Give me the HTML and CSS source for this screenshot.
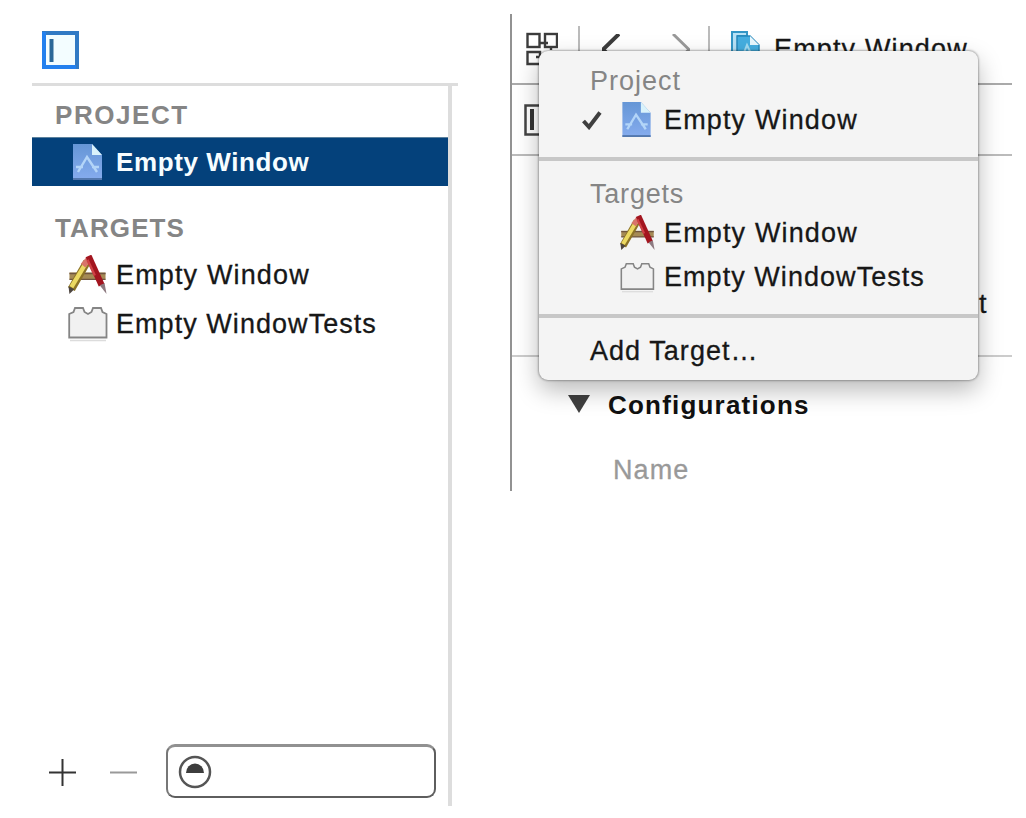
FILE: index.html
```html
<!DOCTYPE html>
<html lang="en">
<head>
<meta charset="utf-8">
<title>Project and targets</title>
<link rel="stylesheet" href="styles.css">
</head>
<body>
<svg class="defs" aria-hidden="true">
  <defs>
    <linearGradient id="blueprint" x1="0" y1="0" x2="0" y2="1">
      <stop offset="0" stop-color="#6596d6"/><stop offset="1" stop-color="#86acee"/>
    </linearGradient>
    <symbol id="project" viewBox="0 0 30 37">
      <path d="M0 0H19L29 11V36H0Z" fill="url(#blueprint)"/>
      <path d="M0 35H29" stroke="#5378ae" stroke-width="2"/>
      <path d="M19 0L29 11H19Z" fill="#d9f2fb"/>
      <path d="M5 28L14 13L24 28M3 23H10M19 23H26" fill="none" stroke="#b3d5f8" stroke-width="2.4"/>
    </symbol>
    <symbol id="app" viewBox="0 0 39 41">
      <path d="M1 18H38V25H1Z" fill="#a58a55"/>
      <path d="M1 19H38M1 25H38" stroke="#6f5540" stroke-width="1.5"/>
      <path d="M19 7L3 35" stroke="#8c7326" stroke-width="8"/>
      <path d="M18 8L3 33" stroke="#ecd962" stroke-width="4.5"/>
      <path d="M15 11L20 5" stroke="#d8746a" stroke-width="6"/>
      <path d="M0 32L6 35L1 40Z" fill="#4d4540"/>
      <path d="M20.500 1L34 31" stroke="#a3151f" stroke-width="6.5"/>
      <path d="M19.500 5L27 21" stroke="#cf4145" stroke-width="2.5"/>
      <path d="M32 31L37 29L39 40Z" fill="#8d7a80"/>
    </symbol>
    <symbol id="brick" viewBox="0 0 40 36">
      <path d="M1.200 31.500V8L5.500 6L7 2H15L16.500 6L20 8L23.500 6L25 2H33L34.500 6L38.500 8V31.500Z" fill="#f1f1f1" stroke="#858585" stroke-width="1.8"/>
      <path d="M2 34.500H38" stroke="#dcdcdc" stroke-width="1.5"/>
    </symbol>
  </defs>
</svg>
<main class="stage">
  <section class="sidebar">
    <header class="sidebar-head">
      <svg class="panel-icon" viewBox="0 0 37 38"><rect x="2" y="2" width="33" height="34" fill="#f3fdff" stroke="#317ac4" stroke-width="4"/><path d="M2 1V36H34" fill="none" stroke="#2380ee" stroke-width="4"/><path d="M9.500 8V31" stroke="#2c6898" stroke-width="4"/></svg>
    </header>
    <div class="sidebar-body">
      <h2 class="group"><span class="t-project">PROJECT</span></h2>
      <div class="item selected"><svg class="ico-project"><use href="#project"/></svg><span>Empty Window</span></div>
      <h2 class="group targets"><span class="t-targets">TARGETS</span></h2>
      <div class="item"><svg class="ico-app"><use href="#app"/></svg><span>Empty Window</span></div>
      <div class="item"><svg class="ico-brick"><use href="#brick"/></svg><span class="long">Empty WindowTests</span></div>
      <footer class="controls">
        <svg class="plus" viewBox="0 0 27 27"><path d="M0 13.500H27M13.500 0V27" stroke="#333" stroke-width="2"/></svg>
        <svg class="minus" viewBox="0 0 27 27"><path d="M0 13.500H27" stroke="#999" stroke-width="2"/></svg>
        <div class="filter"><svg viewBox="0 0 34 34"><circle cx="17" cy="17" r="15" fill="#fff" stroke="#555" stroke-width="2.5"/><path d="M8 18A9 9.500 0 0 1 26 18Z" fill="#3d3d3d"/></svg></div>
      </footer>
    </div>
  </section>

  <section class="editor">
    <div class="jumpbar">
      <svg class="related" viewBox="0 0 32 34"><g fill="none" stroke="#3c3c3c" stroke-width="2.400"><rect x="1.500" y="2" width="12" height="13"/><rect x="19" y="2" width="12" height="13"/><path d="M14 32H1.500V20H14V25H10M13 11H22M25 15V18"/></g></svg>
      <i class="divider"></i>
      <svg class="back" viewBox="0 0 18 30"><path d="M17 0L1 15.500L17 31" fill="none" stroke="#3c3c3c" stroke-width="4"/></svg>
      <svg class="forward" viewBox="0 0 18 30"><path d="M1 0L17 15.500L1 31" fill="none" stroke="#999" stroke-width="3"/></svg>
      <i class="divider second"></i>
      <svg class="doc" viewBox="0 0 29 36"><path d="M1 1H16V5H7V28H1Z" fill="#b7e2f6" stroke="#3296c6" stroke-width="2"/><path d="M6 5H19L28 14V35H6Z" fill="#45aee0" stroke="#2689bc" stroke-width="1.500"/><path d="M19 5V14H28Z" fill="#e7f8ff"/><path d="M10 29L16 14L23 29M12 23H22" fill="none" stroke="#a2dcf3" stroke-width="2"/></svg>
      <span class="crumb">Empty Window</span>
    </div>
    <div class="tabbar"><svg class="tab-icon" viewBox="0 0 32 32"><rect x="1.500" y="1.500" width="29" height="29" fill="#fff" stroke="#444" stroke-width="2.500"/><path d="M8 5V26" stroke="#333" stroke-width="4"/></svg></div>
    <div class="deployment"><span>t</span></div>
    <div class="config"><svg viewBox="0 0 22 18"><path d="M0 0H22L11 18Z" fill="#404040"/></svg><h3>Configurations</h3></div>
    <div class="name">Name</div>
    <nav class="menu">
      <div class="menu-group first">
        <div class="menu-title"><span class="m-project">Project</span></div>
        <div class="option"><svg class="check" viewBox="0 0 20 19"><path d="M1.500 10L7 16L18 1.500" fill="none" stroke="#3f3f3f" stroke-width="4"/></svg><svg class="menu-project"><use href="#project"/></svg><span>Empty Window</span></div>
      </div>
      <div class="menu-group second">
        <div class="menu-title"><span class="m-targets">Targets</span></div>
        <div class="option"><svg class="menu-app"><use href="#app"/></svg><span>Empty Window</span></div>
        <div class="option"><svg class="menu-brick"><use href="#brick"/></svg><span class="long">Empty WindowTests</span></div>
      </div>
      <div class="add"><span>Add Target…</span></div>
    </nav>
  </section>
</main>
</body>
</html>
```
FILE: styles.css
```css
* { box-sizing: border-box; }
body { margin: 0; background: #fff; color: #171717; font: 27px/30px "Liberation Sans", Arial, sans-serif; -webkit-text-stroke: .3px; }
svg { display: block; flex: none; }
h2, h3 { margin: 0; font-size: 26px; -webkit-text-stroke: 0; }
.defs { position: absolute; width: 0; height: 0; }
.stage { display: flex; align-items: flex-start; gap: 52px; width: 1026px; height: 818px; padding: 14px 14px 0 32px; overflow: hidden; }

.sidebar { width: 426px; height: 792px; flex: none; }
.sidebar-head { height: 72px; padding: 17px 0 0 10px; border-bottom: 3px solid #ddd; }
.panel-icon { width: 37px; height: 38px; }
.sidebar-body { display: flex; flex-direction: column; width: 420px; height: 720px; border-right: 4px solid #ddd; }
.group { height: 51px; padding: 14px 0 0 23px; color: #858585; white-space: nowrap; }
.group.targets { height: 64px; padding-top: 27px; }
.t-project { letter-spacing: 1.55px; }
.t-targets { letter-spacing: 1.1px; }
.item { display: flex; align-items: center; height: 49px; padding-left: 36px; letter-spacing: 1.15px; white-space: nowrap; }
.item span { width: 280px; padding-left: 1px; }
.item .long { letter-spacing: 1.05px; }
.item.selected { background: #04417b; border-top: 1px solid #5b819d; color: #f7fdff; font-size: 26px; font-weight: 700; letter-spacing: .6px; -webkit-text-stroke: 0; }
.ico-project { width: 30px; height: 37px; margin: 0 12px 0 5px; }
.ico-app { width: 39px; height: 40px; margin-right: 8px; }
.ico-brick { width: 40px; height: 36px; margin-right: 7px; }
.controls { display: flex; align-items: center; height: 54px; margin-top: auto; margin-bottom: 8px; padding-left: 17px; }
.plus, .minus { width: 27px; height: 27px; margin-top: 3px; }
.minus { margin-left: 34px; }
.filter { display: flex; align-items: center; width: 270px; height: 54px; margin-left: 29px; padding-left: 10px; border: 2px solid #5e5e5e; border-top: 3px solid #919191; border-left-color: #777; border-radius: 9px; }
.filter svg { width: 34px; height: 34px; }

.editor { position: relative; width: 502px; height: 477px; flex: none; border-left: 2px solid #929292; }
.jumpbar { display: flex; align-items: center; height: 71px; padding-left: 14px; border-bottom: 2px solid #aaa; }
.related { width: 32px; height: 34px; }
.divider { width: 2px; height: 46px; margin-left: 20px; background: #bbb; }
.divider.second { margin-left: 18px; }
.back { width: 18px; height: 30px; margin-left: 22px; }
.forward { width: 18px; height: 30px; margin-left: 52px; }
.doc { width: 29px; height: 36px; margin-left: 21px; }
.crumb { margin-left: 14px; letter-spacing: 1.15px; white-space: nowrap; }
.tabbar { height: 71px; padding: 19px 0 0 12px; border-bottom: 2px solid #bbb; }
.tab-icon { width: 32px; height: 32px; }
.deployment { display: flex; align-items: flex-end; height: 201px; padding: 0 0 36px 467px; border-bottom: 2px solid #ccc; }
.config { display: flex; align-items: center; height: 96px; }
.config svg { width: 22px; height: 18px; margin: -2px 18px 0 56px; }
.config h3 { letter-spacing: 1.2px; color: #111; }
.name { padding: 2px 0 0 101px; color: #999; letter-spacing: 1.1px; }

/* Pop-up menu over the jump bar and editor */
.menu { position: absolute; left: 27px; top: 37px; width: 439px; height: 329px; background: #f4f4f4; border-radius: 9px; box-shadow: 0 0 2px 1px rgba(0,0,0,.28), 0 10px 25px rgba(0,0,0,.28); white-space: nowrap; }
.menu-group.first { height: 110px; border-bottom: 4px solid #c7c7c7; padding-top: 15px; }
.menu-group.second { height: 157px; border-bottom: 4px solid #c7c7c7; padding-top: 18px; }
.menu-title { height: 32px; padding-left: 51px; color: #858585; -webkit-text-stroke: 0; }
.m-project { letter-spacing: 1px; }
.m-targets { letter-spacing: .8px; }
.option { display: flex; align-items: center; height: 44px; padding-left: 81px; letter-spacing: 1.15px; }
.option .long { letter-spacing: 1.05px; }
.first .option { padding-left: 43px; }
.check { width: 20px; height: 19px; }
.menu-project { width: 30px; height: 36px; margin: 0 12px 0 20px; }
.menu-app { width: 35px; height: 36px; margin-right: 9px; }
.menu-brick { width: 35px; height: 31px; margin-right: 9px; }
.add { padding: 18px 0 0 51px; letter-spacing: 1.05px; }
```
